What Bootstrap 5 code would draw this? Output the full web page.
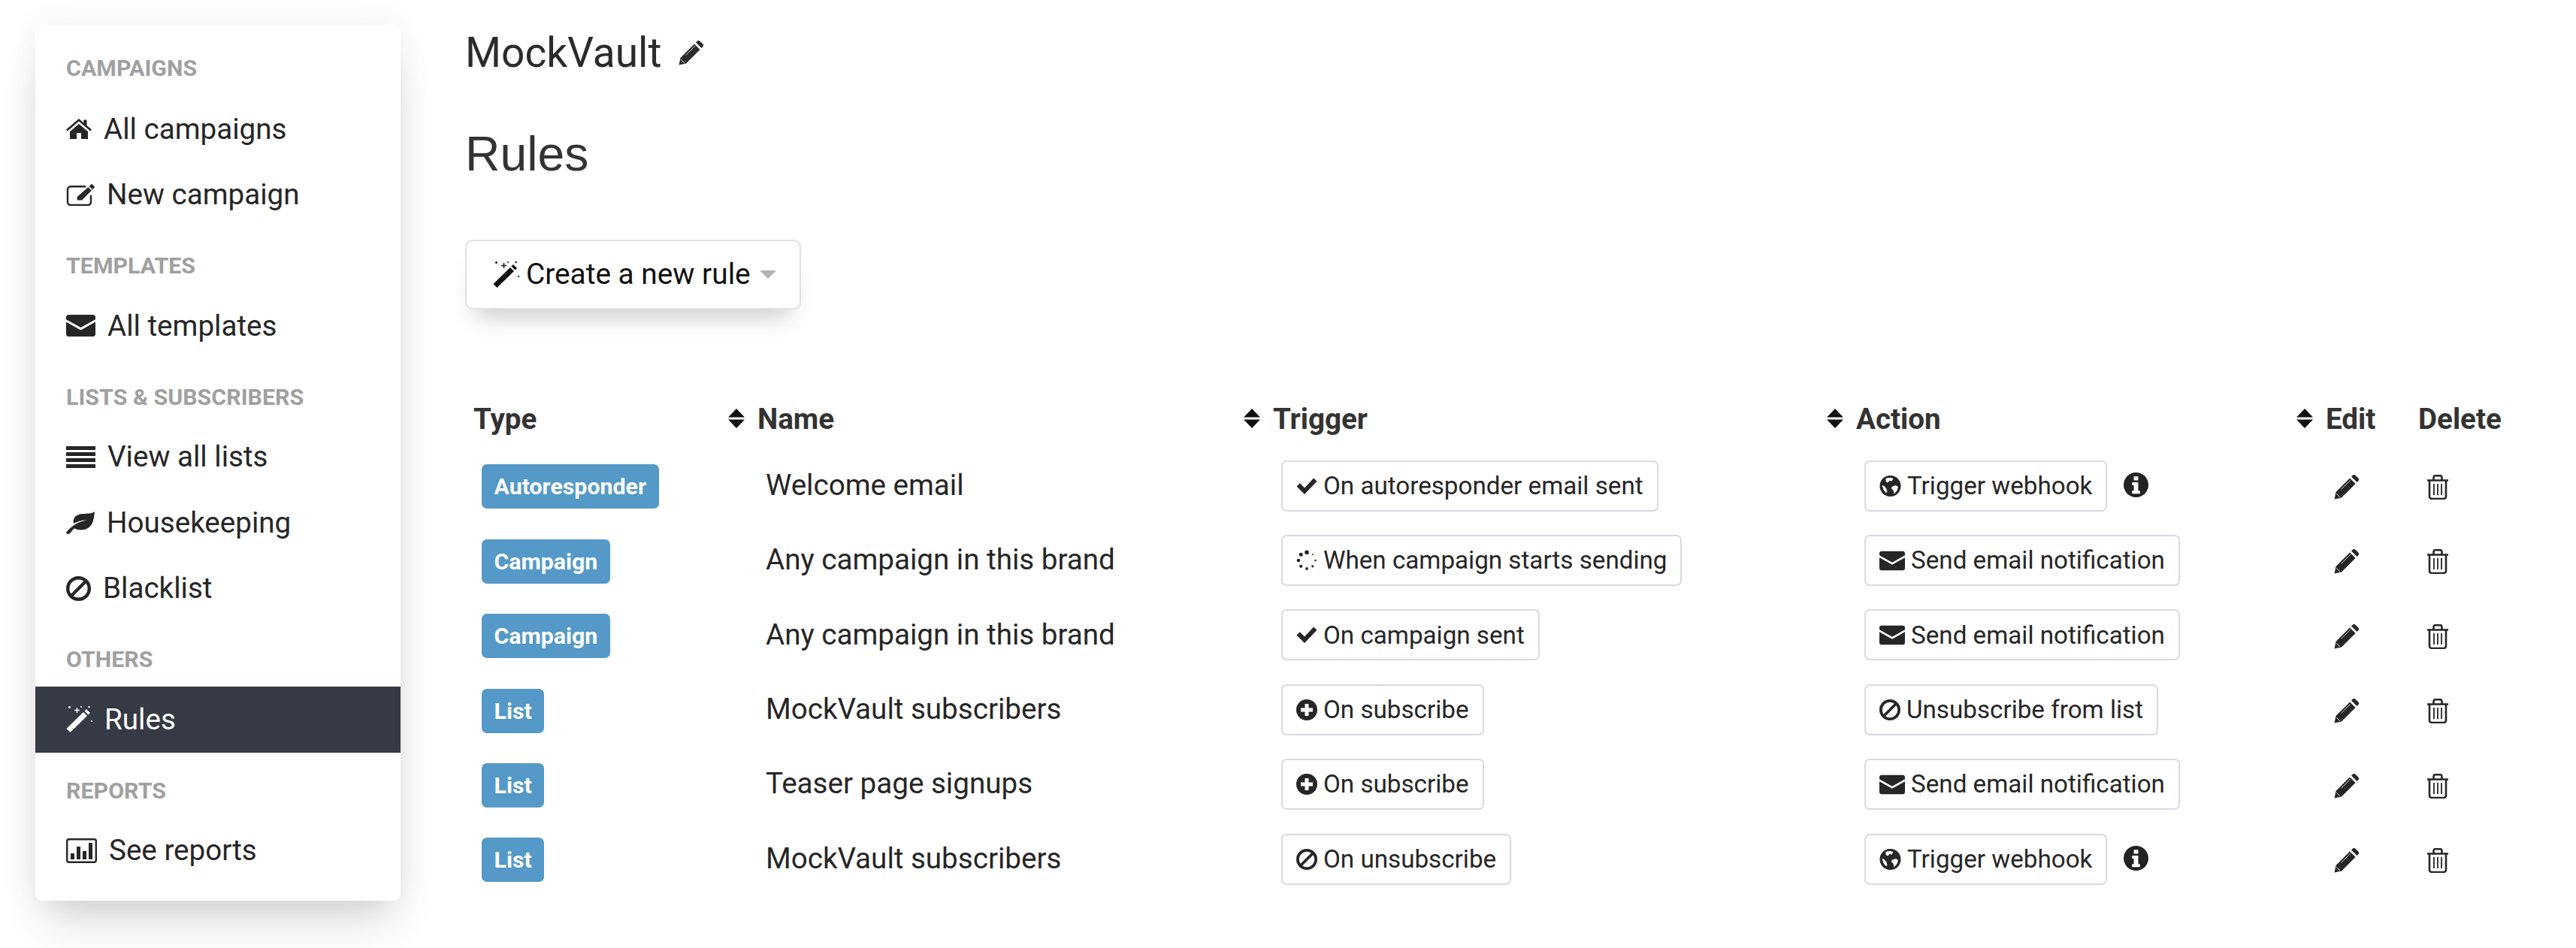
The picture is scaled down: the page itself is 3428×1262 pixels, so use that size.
<!DOCTYPE html>
<html lang="en">
<head>
  <meta charset="UTF-8">
  <title>MockVault - Rules</title>
  <link href="https://cdn.jsdelivr.net/npm/bootstrap@5.3.0/dist/css/bootstrap.min.css" rel="stylesheet">
  <style>
    body {
      font-family: Roboto, "Liberation Sans", sans-serif;
      color: #262626;
      background: #fff;
    }
    .ico {
      fill: currentColor;
      flex: none;
    }
    .page-wrap {
      min-height: 1262px;
      padding: 33px 0 0 47px;
    }
    .side-menu {
      width: 486px;
      flex: none;
      padding-bottom: 23px;
      background: #fff;
      border-radius: 8px;
      box-shadow: 0 38px 56px -14px rgba(0, 0, 0, .16), 0 0 44px rgba(0, 0, 0, .06);
    }
    .side-label {
      padding: 37px 41px 22px;
      font-size: 30.4px;
      line-height: 28px;
      font-weight: 700;
      color: #a0a0a0;
      text-transform: uppercase;
    }
    .side-label.first-label {
      padding-top: 44px;
      padding-bottom: 23px;
    }
    .side-link {
      height: 87.5px;
      padding: 0 41px;
      font-size: 38.6px;
      color: #262626;
      gap: 16px;
    }
    .side-link:hover {
      color: #262626;
    }
    .side-link.active {
      background: #353a44;
      color: #fff;
    }
    .main-col {
      margin-left: 86px;
      width: 2739px;
      flex: none;
    }
    .brand-title {
      margin: 0;
      height: 74px;
      font-size: 55px;
      line-height: 74px;
      font-weight: 400;
      color: #2b2b2b;
      gap: 23px;
    }
    .page-title {
      margin: 58px 0 0;
      font-family: "Liberation Sans", Arial, sans-serif;
      font-size: 64.3px;
      line-height: 80px;
      font-weight: 400;
      color: #333;
    }
    .btn-create {
      margin-top: 74px;
      height: 93px;
      padding: 0 31px 0 35px;
      font-size: 38.8px;
      color: #111;
      background: #fff;
      border: 2px solid #e2e2e2;
      border-radius: 10px;
      box-shadow: 0 24px 30px -14px rgba(0, 0, 0, .2);
      gap: 9px;
    }
    .btn-create.dropdown-toggle::after {
      margin-left: 3px;
      border-top: 11px solid #b3b3b3;
      border-right: 11px solid transparent;
      border-left: 11px solid transparent;
      border-bottom: 0;
    }
    .rules-table {
      width: 2722px;
      margin-top: 107px;
      table-layout: fixed;
      border-collapse: collapse;
    }
    .rules-table th {
      height: 77px;
      padding: 0 6px 0 11px;
      font-size: 38.6px;
      font-weight: 700;
      color: #333;
    }
    .rules-table td {
      height: 99.4px;
      padding: 0 0 0 22px;
      font-size: 38.6px;
      color: #262626;
    }
    .sort-ico {
      color: #111;
    }
    .rule-type.badge {
      height: 59px;
      margin-top: 4px;
      padding: 0 16.5px;
      font-size: 30.3px;
      line-height: 59px;
      font-weight: 700;
      background: #5499c7;
      border-radius: 7px;
      color: #fff;
      vertical-align: middle;
    }
    .rule-chip {
      height: 68px;
      margin-top: 2px;
      padding: 0 18px;
      font-size: 33.2px;
      color: #262626;
      background: #fff;
      border: 2px solid #d9d9e3;
      border-radius: 7px;
      gap: 8px;
    }
    .info-ico {
      margin-left: 22px;
      color: #222;
    }
    .row-ico {
      color: #262626;
    }
  </style>
</head>
<body>
  <!-- icons -->
  <svg class="d-none" xmlns="http://www.w3.org/2000/svg">
    <symbol id="i-home" viewBox="0 0 34 27">
      <path d="M17 0 0 14.5l1.8 2.1L17 3.6l15.2 13 1.8-2.1L27.5 9V1.5h-4.2v3.9z"/>
      <path d="M5 17.2 17 7l12 10.2V27h-9v-8h-6v8H5z"/>
    </symbol>
    <symbol id="i-edit" viewBox="0 0 38 29">
      <path d="M26 3.200H6a4 4 0 0 0-4 4V24a4 4 0 0 0 4 4h23a4 4 0 0 0 4-4V15" fill="none" stroke="currentColor" stroke-width="2.400"/>
      <path d="M33 .6a1.500 1.500 0 0 1 2 0l2.400 2.400a1.500 1.500 0 0 1 0 2l-2.300 2.300-4.400-4.400zM29.400 4.200l4.400 4.400L21 21.500h-6.300v-4.400z"/>
    </symbol>
    <symbol id="i-mail" viewBox="0 0 39 29">
      <path d="M3.500 0h32A3.500 3.500 0 0 1 39 3.500v2.700L19.500 17 0 6.200V3.500A3.500 3.500 0 0 1 3.500 0z"/>
      <path d="M0 9.600 19.500 20.400 39 9.600v16A3.400 3.400 0 0 1 35.600 29H3.400A3.400 3.400 0 0 1 0 25.600z"/>
    </symbol>
    <symbol id="i-bars" viewBox="0 0 39 29">
      <path d="M0 0h39v5H0zM0 8h39v5H0zM0 16h39v5H0zM0 24h39v5H0z"/>
    </symbol>
    <symbol id="i-leaf" viewBox="0 0 38 30">
      <path d="M38 0c-1 9-2 18-9 22-6 3.500-13 3-18 .5-2 1.500-4 4-6 6.500-1 1.500-4.500 1-5-1 3-4 7-8 12-11 5-3 11-5 16-5.500-6-.5-13 1.500-18 4.500C8 8 14 3.500 22 3c6-.3 12 0 16-3z"/>
    </symbol>
    <symbol id="i-ban" viewBox="0 0 33 33">
      <circle cx="16.500" cy="16.500" r="14.300" fill="none" stroke="currentColor" stroke-width="4.400"/>
      <path d="M6.500 26.500 26.500 6.500" fill="none" stroke="currentColor" stroke-width="4.400"/>
    </symbol>
    <symbol id="i-wand" viewBox="0 0 35 35">
      <path d="M27 4 32 9 29.500 11.500 24.500 6.500zM23 8 28 13 5.500 35 .5 30z"/>
      <path d="M11 5.500h7M14.500 2v7M3 1.500h3M4.500 0v3M29 1h3M33 20h2M34 19v2M19 1h2" fill="none" stroke="currentColor" stroke-width="1.400"/>
    </symbol>
    <symbol id="i-chart" viewBox="0 0 41 33">
      <rect x="1.200" y="1.200" width="38.600" height="30.600" rx="2.500" fill="none" stroke="currentColor" stroke-width="2.400"/>
      <path d="M6 20h5v8H6zM14 11h5v17h-5zM22 17h5v11h-5zM30 6h5v22h-5z"/>
    </symbol>
    <symbol id="i-pencil" viewBox="0 0 33 33">
      <path d="M23 2.500 24.500 1a3 3 0 0 1 4.200 0L32 4.300a3 3 0 0 1 0 4.200L30.500 10z"/>
      <path d="M21 4.500 28.500 12 10 30.500.5 32.500 2.500 23z"/>
      <path d="M3 25l5 5M9.500 19.500 22 7" fill="none" stroke="#fff" stroke-width=".8"/>
    </symbol>
    <symbol id="i-trash" viewBox="0 0 30 33">
      <path d="M1 7.500h28M9.500 7.500V3.500A2.500 2.500 0 0 1 12 1.200h6a2.500 2.500 0 0 1 2.500 2.300v4M4 7.500V29a3 3 0 0 0 3 3h16a3 3 0 0 0 3-3V7.500" fill="none" stroke="currentColor" stroke-width="2.600"/>
      <path d="M10 12v15M15 12v15M20 12v15" fill="none" stroke="currentColor" stroke-width="1.800"/>
    </symbol>
    <symbol id="i-sort" viewBox="0 0 22 26">
      <path d="M11 0 22 11.500H0zM0 14.500h22L11 26z"/>
    </symbol>
    <symbol id="i-check" viewBox="0 0 28 28">
      <path d="M11 25 .5 14.500l4.300-4.300L11 16.400 23.200 3.500l4.300 4.300z"/>
    </symbol>
    <symbol id="i-spin" viewBox="0 0 28 28">
      <circle cx="14" cy="3.200" r="2.800"/><circle cx="6.200" cy="6.200" r="2.500"/>
      <circle cx="3" cy="14" r="2.300"/><circle cx="6.200" cy="21.800" r="2.100"/>
      <circle cx="14" cy="25" r="1.900"/><circle cx="21.800" cy="21.800" r="1.600"/>
      <circle cx="25.500" cy="14" r="1.300"/><circle cx="21.800" cy="6.200" r="1"/>
    </symbol>
    <symbol id="i-plus" viewBox="0 0 28 28">
      <circle cx="14" cy="14" r="14"/>
      <path d="M11.500 6h5v5.500H22v5h-5.500V22h-5v-5.500H6v-5h5.500z" fill="#fff"/>
    </symbol>
    <symbol id="i-globe" viewBox="0 0 28 28">
      <circle cx="14" cy="14" r="14"/>
      <path d="M8 4c3-1.500 7-1.500 10 0l-2 3.500-3-.5-2.500 2.500L8 8zM16 15l5-2 3.500 2-1.500 5-4 4.500-1-5-2.500-2zM3 13l3 1 3 4 1 4-2 1-3-4z" fill="#fff"/>
    </symbol>
    <symbol id="i-info" viewBox="0 0 28 28">
      <circle cx="14" cy="14" r="14"/>
      <path d="M11.500 4.500h5v4.500h-5zM9.500 11h7v9.500h2v3.500h-9v-3.500h2v-6h-2z" fill="#fff"/>
    </symbol>
  </svg>

  <div class="page-wrap d-flex align-items-start">
    <nav class="side-menu">
      <div class="side-label first-label">Campaigns</div>
      <a class="side-link d-flex align-items-center text-decoration-none" href="#"><svg class="ico" width="34" height="27"><use href="#i-home"/></svg>All campaigns</a>
      <a class="side-link d-flex align-items-center text-decoration-none" href="#"><svg class="ico" width="38" height="29"><use href="#i-edit"/></svg>New campaign</a>
      <div class="side-label">Templates</div>
      <a class="side-link d-flex align-items-center text-decoration-none" href="#"><svg class="ico" width="39" height="29"><use href="#i-mail"/></svg>All templates</a>
      <div class="side-label">Lists &amp; subscribers</div>
      <a class="side-link d-flex align-items-center text-decoration-none" href="#"><svg class="ico" width="39" height="29"><use href="#i-bars"/></svg>View all lists</a>
      <a class="side-link d-flex align-items-center text-decoration-none" href="#"><svg class="ico" width="38" height="30"><use href="#i-leaf"/></svg>Housekeeping</a>
      <a class="side-link d-flex align-items-center text-decoration-none" href="#"><svg class="ico" width="33" height="33"><use href="#i-ban"/></svg>Blacklist</a>
      <div class="side-label">Others</div>
      <a class="side-link active d-flex align-items-center text-decoration-none" href="#"><svg class="ico" width="35" height="35"><use href="#i-wand"/></svg>Rules</a>
      <div class="side-label">Reports</div>
      <a class="side-link d-flex align-items-center text-decoration-none" href="#"><svg class="ico" width="41" height="33"><use href="#i-chart"/></svg>See reports</a>
    </nav>

    <main class="main-col">
      <h2 class="brand-title d-flex align-items-center">MockVault <svg class="ico" width="33" height="33"><use href="#i-pencil"/></svg></h2>
      <h1 class="page-title">Rules</h1>

      <button class="btn btn-create dropdown-toggle d-inline-flex align-items-center" type="button"><svg class="ico" width="35" height="35"><use href="#i-wand"/></svg>Create a new rule</button>

      <table class="rules-table">
        <colgroup>
          <col style="width: 378px">
          <col style="width: 686px">
          <col style="width: 776px">
          <col style="width: 625px">
          <col style="width: 123px">
          <col style="width: 134px">
        </colgroup>
        <thead>
          <tr>
            <th><div class="d-flex justify-content-between align-items-center">Type <svg class="ico sort-ico" width="22" height="26"><use href="#i-sort"/></svg></div></th>
            <th><div class="d-flex justify-content-between align-items-center">Name <svg class="ico sort-ico" width="22" height="26"><use href="#i-sort"/></svg></div></th>
            <th><div class="d-flex justify-content-between align-items-center">Trigger <svg class="ico sort-ico" width="22" height="26"><use href="#i-sort"/></svg></div></th>
            <th><div class="d-flex justify-content-between align-items-center">Action <svg class="ico sort-ico" width="22" height="26"><use href="#i-sort"/></svg></div></th>
            <th>Edit</th>
            <th>Delete</th>
          </tr>
        </thead>
        <tbody>
          <tr>
            <td><span class="badge rule-type">Autoresponder</span></td>
            <td>Welcome email</td>
            <td><span class="rule-chip d-inline-flex align-items-center"><svg class="ico" width="28" height="28"><use href="#i-check"/></svg>On autoresponder email sent</span></td>
            <td><div class="d-flex align-items-center"><span class="rule-chip d-inline-flex align-items-center"><svg class="ico" width="29" height="28"><use href="#i-globe"/></svg>Trigger webhook</span><svg class="ico info-ico" width="33" height="33"><use href="#i-info"/></svg></div></td>
            <td><svg class="ico row-ico" width="33" height="33"><use href="#i-pencil"/></svg></td>
            <td><svg class="ico row-ico" width="30" height="33"><use href="#i-trash"/></svg></td>
          </tr>
          <tr>
            <td><span class="badge rule-type">Campaign</span></td>
            <td>Any campaign in this brand</td>
            <td><span class="rule-chip d-inline-flex align-items-center"><svg class="ico" width="28" height="28"><use href="#i-spin"/></svg>When campaign starts sending</span></td>
            <td><span class="rule-chip d-inline-flex align-items-center"><svg class="ico" width="34" height="27"><use href="#i-mail"/></svg>Send email notification</span></td>
            <td><svg class="ico row-ico" width="33" height="33"><use href="#i-pencil"/></svg></td>
            <td><svg class="ico row-ico" width="30" height="33"><use href="#i-trash"/></svg></td>
          </tr>
          <tr>
            <td><span class="badge rule-type">Campaign</span></td>
            <td>Any campaign in this brand</td>
            <td><span class="rule-chip d-inline-flex align-items-center"><svg class="ico" width="28" height="28"><use href="#i-check"/></svg>On campaign sent</span></td>
            <td><span class="rule-chip d-inline-flex align-items-center"><svg class="ico" width="34" height="27"><use href="#i-mail"/></svg>Send email notification</span></td>
            <td><svg class="ico row-ico" width="33" height="33"><use href="#i-pencil"/></svg></td>
            <td><svg class="ico row-ico" width="30" height="33"><use href="#i-trash"/></svg></td>
          </tr>
          <tr>
            <td><span class="badge rule-type">List</span></td>
            <td>MockVault subscribers</td>
            <td><span class="rule-chip d-inline-flex align-items-center"><svg class="ico" width="28" height="28"><use href="#i-plus"/></svg>On subscribe</span></td>
            <td><span class="rule-chip d-inline-flex align-items-center"><svg class="ico" width="28" height="28"><use href="#i-ban"/></svg>Unsubscribe from list</span></td>
            <td><svg class="ico row-ico" width="33" height="33"><use href="#i-pencil"/></svg></td>
            <td><svg class="ico row-ico" width="30" height="33"><use href="#i-trash"/></svg></td>
          </tr>
          <tr>
            <td><span class="badge rule-type">List</span></td>
            <td>Teaser page signups</td>
            <td><span class="rule-chip d-inline-flex align-items-center"><svg class="ico" width="28" height="28"><use href="#i-plus"/></svg>On subscribe</span></td>
            <td><span class="rule-chip d-inline-flex align-items-center"><svg class="ico" width="34" height="27"><use href="#i-mail"/></svg>Send email notification</span></td>
            <td><svg class="ico row-ico" width="33" height="33"><use href="#i-pencil"/></svg></td>
            <td><svg class="ico row-ico" width="30" height="33"><use href="#i-trash"/></svg></td>
          </tr>
          <tr>
            <td><span class="badge rule-type">List</span></td>
            <td>MockVault subscribers</td>
            <td><span class="rule-chip d-inline-flex align-items-center"><svg class="ico" width="28" height="28"><use href="#i-ban"/></svg>On unsubscribe</span></td>
            <td><div class="d-flex align-items-center"><span class="rule-chip d-inline-flex align-items-center"><svg class="ico" width="29" height="28"><use href="#i-globe"/></svg>Trigger webhook</span><svg class="ico info-ico" width="33" height="33"><use href="#i-info"/></svg></div></td>
            <td><svg class="ico row-ico" width="33" height="33"><use href="#i-pencil"/></svg></td>
            <td><svg class="ico row-ico" width="30" height="33"><use href="#i-trash"/></svg></td>
          </tr>
        </tbody>
      </table>
    </main>
  </div>

  <script src="https://cdn.jsdelivr.net/npm/bootstrap@5.3.0/dist/js/bootstrap.bundle.min.js"></script>
</body>
</html>
